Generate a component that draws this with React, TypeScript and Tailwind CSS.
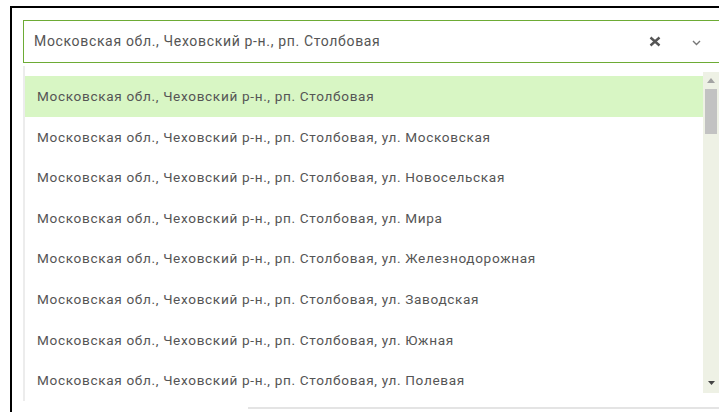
import React from "react";

const base = "Московская обл., Чеховский р-н., рп. Столбовая";

const options = [
  base,
  `${base}, ул. Московская`,
  `${base}, ул. Новосельская`,
  `${base}, ул. Мира`,
  `${base}, ул. Железнодорожная`,
  `${base}, ул. Заводская`,
  `${base}, ул. Южная`,
  `${base}, ул. Полевая`,
];

export default function App() {
  return (
    <div
      className="w-[719px] h-[412px] bg-white overflow-hidden"
      style={{ fontFamily: "Roboto, 'Noto Sans', sans-serif" }}
    >
      <div className="ml-[10px] mt-[6px] h-[420px] border-l-2 border-t-2 border-black pl-[11px] pt-[12px]">
        {/* select control */}
        <div className="w-[720px] h-[43px] border border-[#6dab35] flex items-center">
          <span className="pl-[10px] text-[14px] tracking-[0.66px] text-[#555] flex-1">{base}</span>
          <svg width="12" height="11" viewBox="0 0 12 11">
            <path d="M1.5 1.5 L10.5 9.5 M10.5 1.5 L1.5 9.5" stroke="#555" strokeWidth="2.4" />
          </svg>
          <svg width="9" height="6" viewBox="0 0 9 6" className="ml-[31px] mr-[41px] mt-[2px]">
            <path d="M1 1 L4.5 4.5 L8 1" stroke="#777" strokeWidth="1.4" fill="none" />
          </svg>
        </div>

        {/* options list */}
        <div className="mt-[3px] h-[335px] border-l-2 border-[#ececec] flex">
          <div className="flex-1 pt-[10px]">
            {options.map((o, i) => (
              <div
                key={i}
                className={`h-[40.6px] flex items-center pl-[12px] text-[13.6px] tracking-[0.66px] text-[#555] ${
                  i === 0 ? "bg-[#d8f6c4]" : ""
                }`}
              >
                {o}
              </div>
            ))}
          </div>
          <div className="w-[16px] mt-[6px] h-[321px] bg-[#eef1e5] flex flex-col items-center">
            <svg width="8" height="5" viewBox="0 0 8 5" className="mt-[6px]">
              <path d="M0 5 L4 0 L8 5 Z" fill="#a3a3a3" />
            </svg>
            <div className="mt-[6px] w-[12px] h-[45px] bg-[#c2c2c2]" />
            <div className="flex-1" />
            <svg width="7" height="4" viewBox="0 0 7 4" className="mb-[8px]">
              <path d="M0 0 L7 0 L3.5 4 Z" fill="#444" />
            </svg>
          </div>
        </div>
        <div className="mt-[6px] ml-[225px] h-[2px] bg-[#e4e4e4]" />
      </div>
    </div>
  );
}
